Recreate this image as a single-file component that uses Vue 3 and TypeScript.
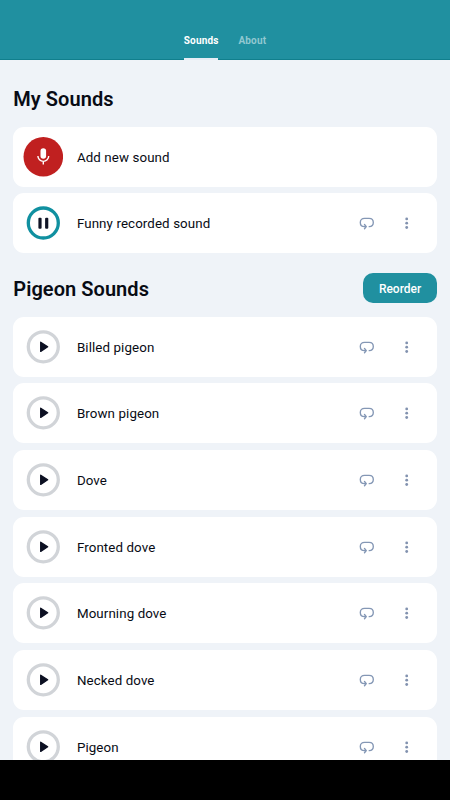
<script setup lang="ts">
interface Sound {
  name: string
  playing?: boolean
}

interface Section {
  title: string
  recordable?: boolean
  reorderable?: boolean
  sounds: Sound[]
}

const sections: Section[] = [
  {
    title: 'My Sounds',
    recordable: true,
    sounds: [{ name: 'Funny recorded sound', playing: true }],
  },
  {
    title: 'Pigeon Sounds',
    reorderable: true,
    sounds: [
      { name: 'Billed pigeon' },
      { name: 'Brown pigeon' },
      { name: 'Dove' },
      { name: 'Fronted dove' },
      { name: 'Mourning dove' },
      { name: 'Necked dove' },
      { name: 'Pigeon' },
    ],
  },
]
</script>

<template>
  <div class="screen">
    <header class="header">
      <nav class="tabs">
        <a class="tab active">Sounds</a>
        <a class="tab">About</a>
      </nav>
    </header>

    <main class="content">
      <section v-for="section in sections" :key="section.title" class="section">
        <div class="heading">
          <h2 class="title">{{ section.title }}</h2>
          <button v-if="section.reorderable" class="reorder">Reorder</button>
        </div>
        <div class="list">
          <div v-if="section.recordable" class="card">
            <span class="slot">
              <svg class="record" viewBox="0 0 40 40">
                <circle cx="20.3" cy="19.8" r="19.8" fill="#c02020" />
                <rect x="17.5" y="11.2" width="5.6" height="10.6" rx="2.8" fill="#fff" />
                <path d="M14.9 19a5.4 5.4 0 0 0 10.8 0M20.3 24.5v3" fill="none" stroke="#fff" stroke-width="1.4" />
              </svg>
            </span>
            <span class="name">Add new sound</span>
          </div>
          <div v-for="sound in section.sounds" :key="sound.name" class="card">
            <span class="slot">
              <svg v-if="sound.playing" class="ring" viewBox="0 0 34 34">
                <circle cx="17.3" cy="17" r="15" fill="none" stroke="#1090a0" stroke-width="3.3" />
                <rect x="12.4" y="11.8" width="3.2" height="11" rx="1" fill="#101426" />
                <rect x="19.1" y="11.8" width="3.2" height="11" rx="1" fill="#101426" />
              </svg>
              <svg v-else class="ring" viewBox="0 0 34 34">
                <circle cx="17.3" cy="16.8" r="15" fill="none" stroke="#d1d4d8" stroke-width="3.3" />
                <path d="M14.7 12.2v9.2l7-4.6z" fill="#0c1022" stroke="#0c1022" stroke-width="1.3" stroke-linejoin="round" />
              </svg>
            </span>
            <span class="name">{{ sound.name }}</span>
            <svg class="loop" viewBox="0 0 16 16">
              <path d="M10.2 11.6c2.6-.2 4.1-1.9 4.1-4.2 0-2.6-1.7-4.1-4.2-4.1H5.5C3 3.300 1.300 4.800 1.300 7.400c0 2.500 1.700 4.200 4.300 4.200h1M5.500 9.500l1.800 2.100-1.800 2.200" fill="none" stroke="#8497b5" stroke-width="1.35" stroke-linecap="round" stroke-linejoin="round" />
            </svg>
            <svg class="more" viewBox="0 0 4 12">
              <circle cx="1.700" cy="1.900" r="1.400" />
              <circle cx="1.700" cy="6.200" r="1.400" />
              <circle cx="1.700" cy="10.500" r="1.400" />
            </svg>
          </div>
        </div>
      </section>
    </main>

    <footer class="system-bar"></footer>
  </div>
</template>

<style>
body {
  margin: 0;
  overflow: hidden;
}
</style>

<style scoped>
.screen {
  display: flex;
  flex-direction: column;
  height: 800px;
  overflow: hidden;
  background: #eff3f8;
  color: #080b14;
  font-family: Roboto, "Liberation Sans", sans-serif;
}

.header {
  box-sizing: border-box;
  display: flex;
  flex: none;
  align-items: flex-end;
  justify-content: center;
  height: 60px;
  background: #2090a0;
  border-bottom: 1px solid #107f8d;
}

.tabs {
  display: flex;
  gap: 20px;
  margin-bottom: -1px;
}

.tab {
  box-sizing: border-box;
  height: 27px;
  border-bottom: 2px solid transparent;
  color: #92c8d1;
  font-size: 10px;
  font-weight: 700;
  line-height: 15px;
  letter-spacing: 0.15px;
}

.tab.active {
  border-color: #e6edf5;
  color: #fff;
}

.content {
  flex: 1;
  min-height: 0;
  padding: 23.3px 13.3px 0;
  overflow: hidden;
}

.section + .section {
  margin-top: 20px;
}

.heading {
  display: flex;
  align-items: center;
  justify-content: space-between;
  height: 30px;
  margin-bottom: 13.4px;
}

.title {
  margin: 0;
  padding-top: 2px;
  font-size: 20px;
  font-weight: 600;
  line-height: 30px;
  letter-spacing: 0.05px;
}

.reorder {
  width: 73.3px;
  height: 30px;
  padding: 2px 0 0;
  border: 0;
  border-radius: 10px;
  background: #2090a0;
  color: #fff;
  font-family: inherit;
  font-size: 12px;
  font-weight: 500;
}

.list {
  display: flex;
  flex-direction: column;
  gap: 6.67px;
}

.card {
  box-sizing: border-box;
  display: flex;
  align-items: center;
  height: 60px;
  padding: 0 28px 0 10px;
  border-radius: 11px;
  background: #fff;
}

.slot {
  display: flex;
  align-items: center;
  justify-content: center;
  width: 40px;
  height: 40px;
  margin-right: 13.6px;
}

.record {
  width: 40px;
  height: 40px;
}

.ring {
  width: 34px;
  height: 34px;
}

.name {
  flex: 1;
  padding-top: 1px;
  font-size: 13.33px;
  letter-spacing: 0.1px;
}

.loop {
  width: 16px;
  height: 16px;
  margin-right: 30px;
}

.more {
  width: 4px;
  height: 12px;
  fill: #8292af;
}

.system-bar {
  flex: none;
  height: 40px;
  background: #000;
}
</style>
